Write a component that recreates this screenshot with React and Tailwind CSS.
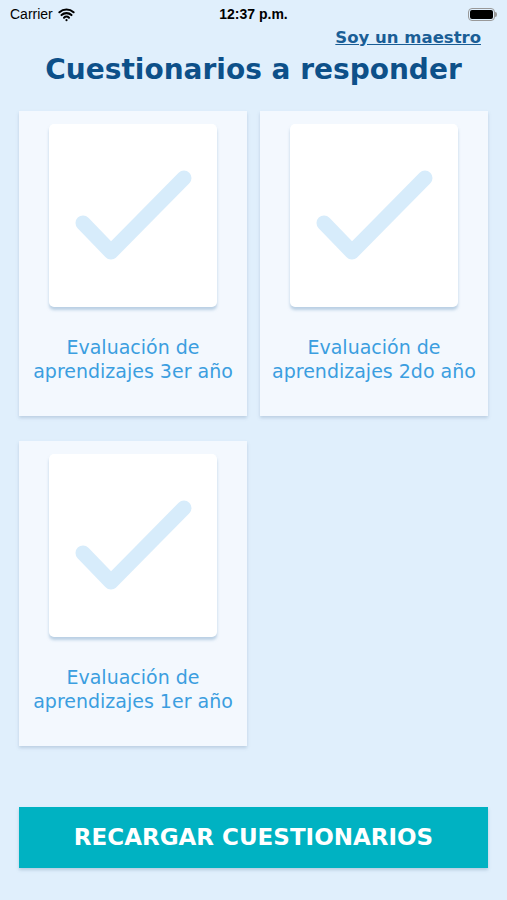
import { Wifi } from 'lucide-react';

const quizzes = [
  { id: 3, title: 'Evaluación de', sub: 'aprendizajes 3er año' },
  { id: 2, title: 'Evaluación de', sub: 'aprendizajes 2do año' },
  { id: 1, title: 'Evaluación de', sub: 'aprendizajes 1er año' },
];

const QuizCard = ({ title, sub }) => (
  <div className="h-[305px] bg-[#f3f8fe] shadow-[0_2px_3px_rgba(120,150,180,0.35)] flex flex-col items-center pt-[13px]">
    <div className="w-[168px] h-[183px] bg-white rounded-[5px] shadow-[0_3px_3px_rgba(140,175,205,0.55)] flex items-center justify-center">
      <svg width="168" height="183" viewBox="0 0 168 183">
        <path
          d="M34 99 L62 128 L135 54"
          fill="none"
          stroke="#d7ecfb"
          strokeWidth="15"
          strokeLinecap="round"
          strokeLinejoin="round"
        />
      </svg>
    </div>
    <div className="mt-[28px] text-center text-[19px] leading-[24px] text-[#3b9ee0]">
      <div>{title}</div>
      <div>{sub}</div>
    </div>
  </div>
);

const App = () => {
  return (
    <div className="min-h-[900px] bg-[#e0effc] font-['DejaVu_Sans',sans-serif]">
      {/* Status bar */}
      <div className="h-[28px] px-[10px] grid grid-cols-3 items-center font-['Liberation_Sans',sans-serif] text-[14px] text-black">
        <div className="flex items-center gap-[5px]">
          <span>Carrier</span>
          <Wifi className="w-[17px] h-[17px]" strokeWidth={3} />
        </div>
        <div className="text-center font-bold">12:37 p.m.</div>
        <div className="flex justify-end">
          <div className="flex items-center">
            <div className="w-[27px] h-[13px] rounded-[4px] border border-[#999] p-[1px]">
              <div className="w-full h-full rounded-[2px] bg-black" />
            </div>
            <div className="w-[2px] h-[5px] bg-[#999] rounded-r-sm" />
          </div>
        </div>
      </div>

      {/* Teacher link */}
      <div className="text-right pr-[26px] leading-[20px]">
        <a className="text-[16.5px] font-bold text-[#1a5e96] underline">Soy un maestro</a>
      </div>

      {/* Title */}
      <h1 className="mt-[4px] text-center text-[28px] leading-[36px] font-bold text-[#0d5089]">
        Cuestionarios a responder
      </h1>

      {/* Cards */}
      <div className="mt-[23px] px-[19px] grid grid-cols-2 gap-x-[13px] gap-y-[25px]">
        {quizzes.map((q) => (
          <QuizCard key={q.id} title={q.title} sub={q.sub} />
        ))}
      </div>

      {/* Reload button */}
      <div className="px-[19px] mt-[61px]">
        <button className="w-full h-[61px] bg-[#00b2c2] shadow-[0_2px_3px_rgba(100,140,170,0.35)] text-white font-bold text-[23px] uppercase">
          Recargar cuestionarios
        </button>
      </div>
    </div>
  );
};

export default App;
